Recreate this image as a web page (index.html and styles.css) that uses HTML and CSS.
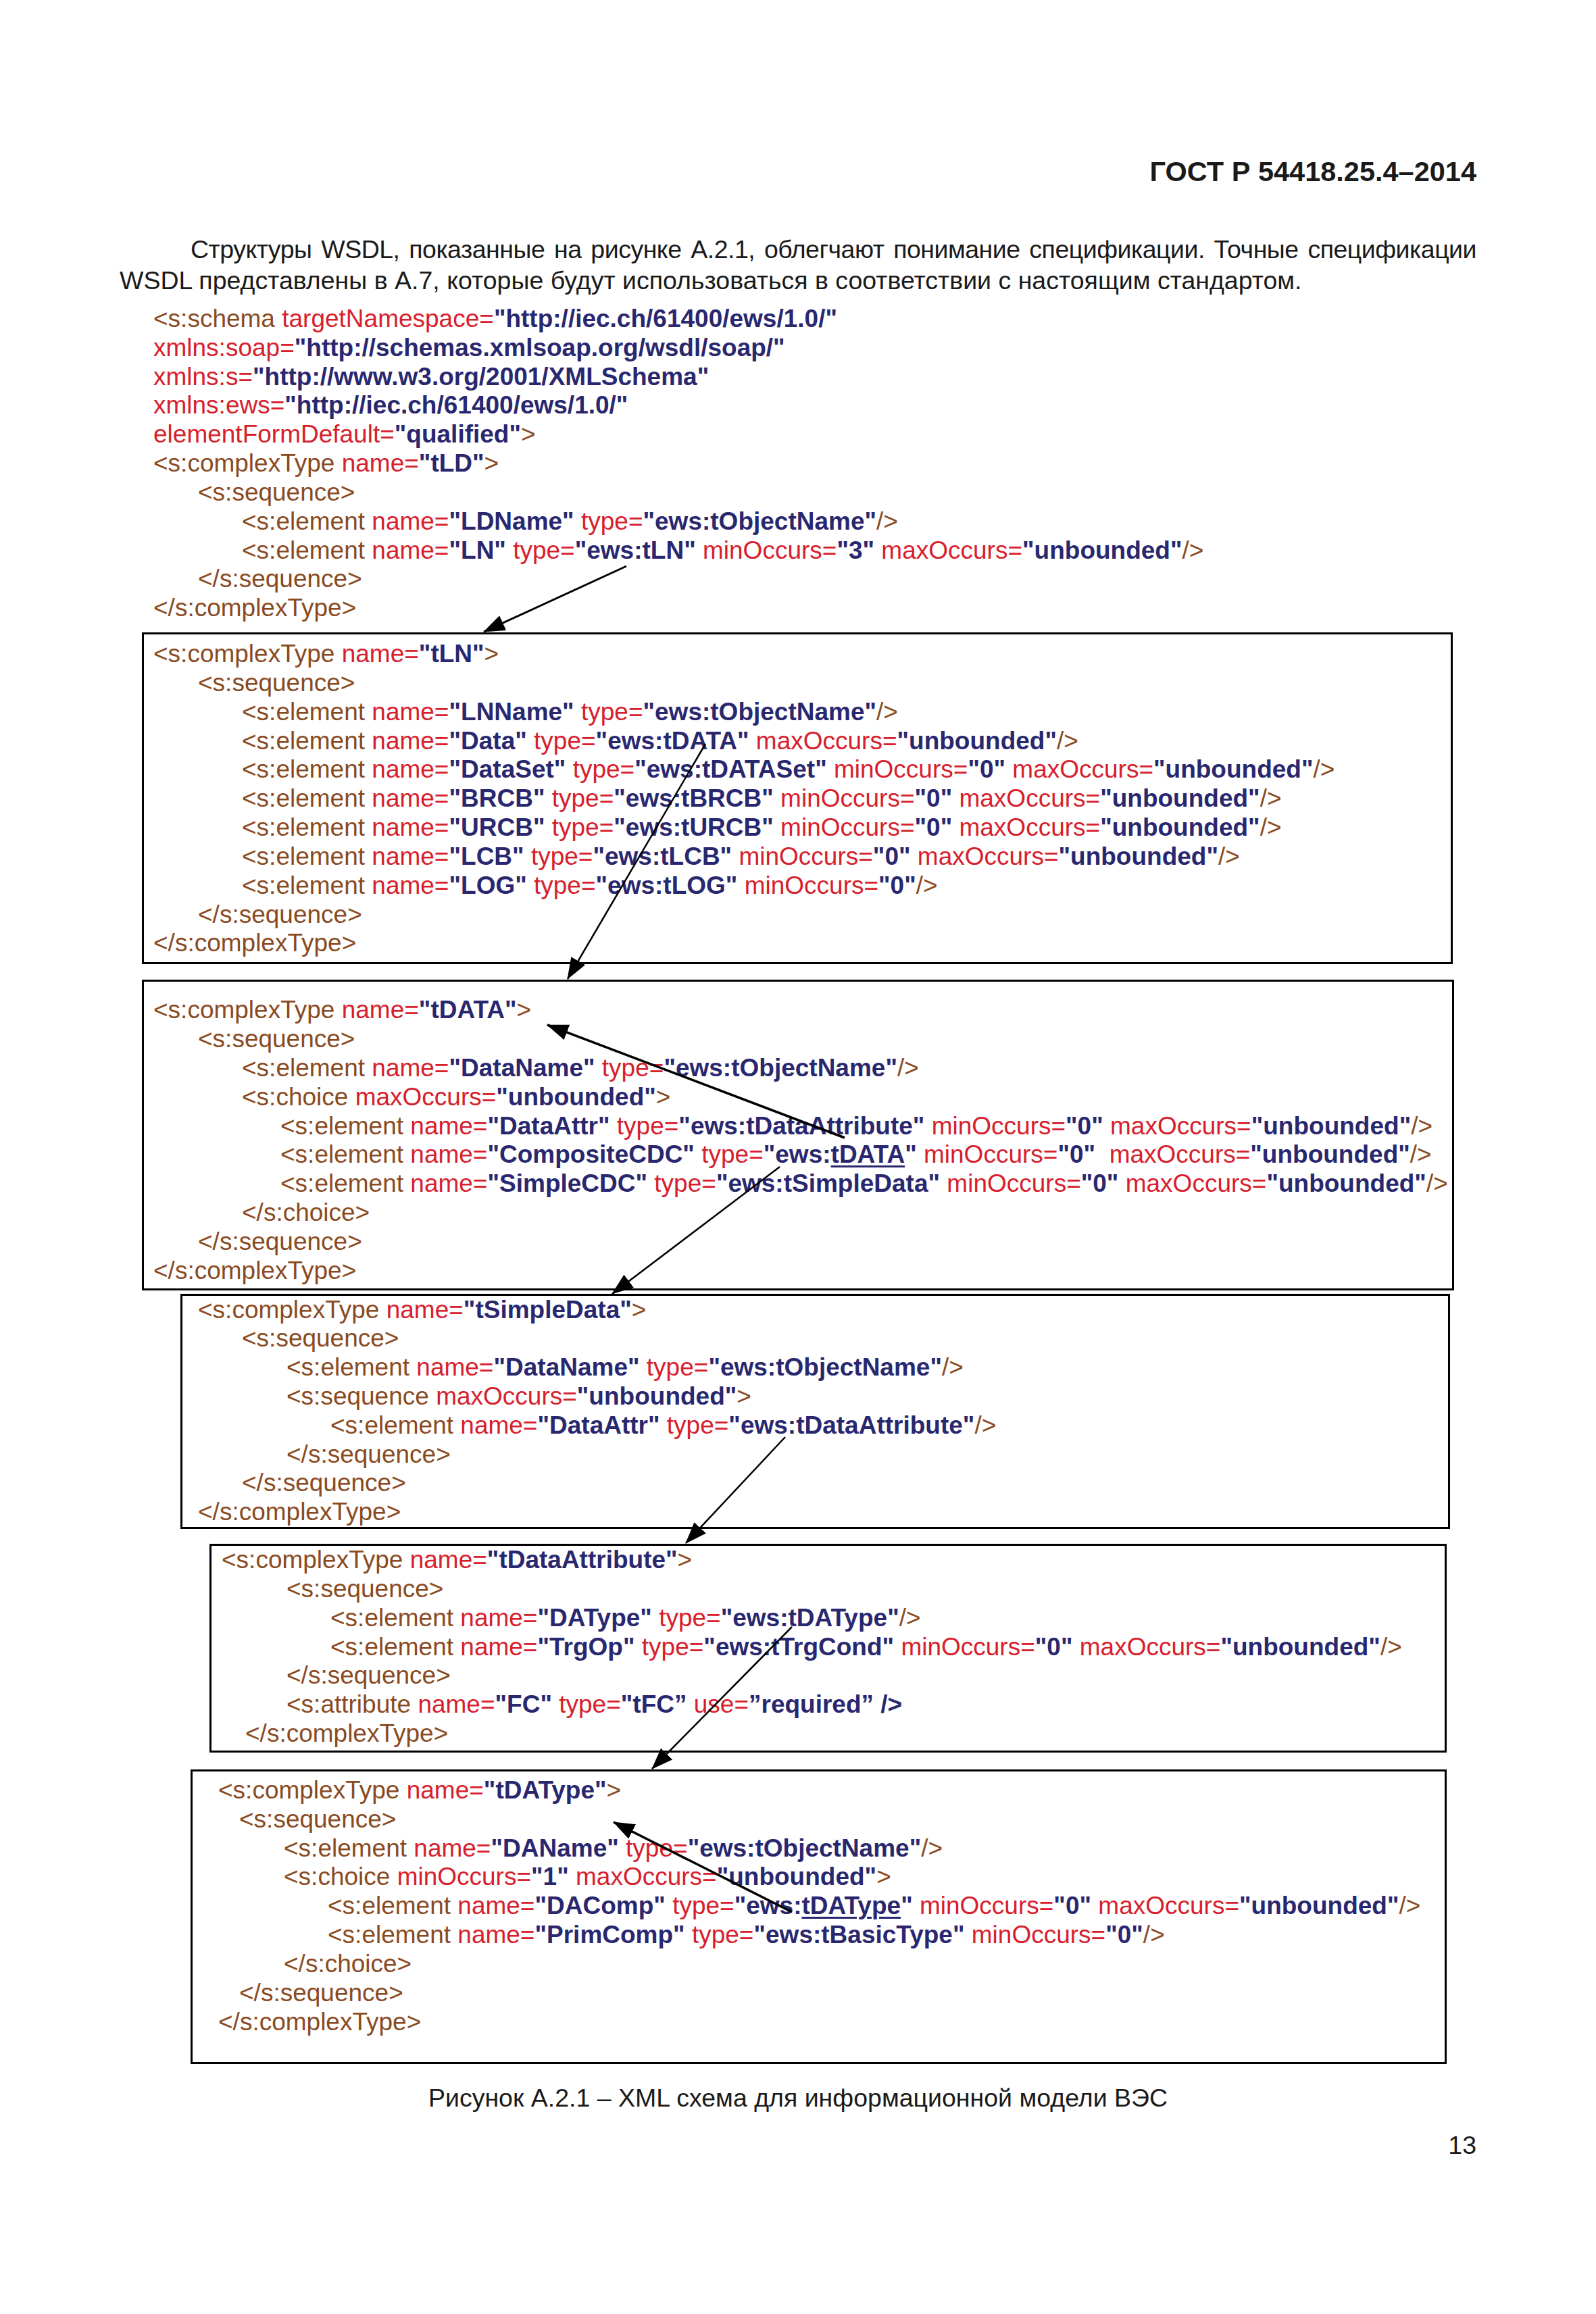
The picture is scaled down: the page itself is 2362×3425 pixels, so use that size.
FILE: index.html
```html
<!DOCTYPE html>
<html lang="ru">
<head>
    <meta charset="UTF-8">
    <title>ГОСТ Р 54418.25.4–2014 — стр. 13</title>
    <link rel="stylesheet" href="styles.css">
</head>
<body>
    <div class="page">
        <div class="doc-head">ГОСТ Р 54418.25.4–2014</div>

        <div class="intro">
            <div class="intro-first">Структуры WSDL, показанные на рисунке А.2.1, облегчают понимание спецификации. Точные спецификации</div>
            <div class="intro-rest">WSDL представлены в А.7, которые будут использоваться в соответствии с настоящим стандартом.</div>
        </div>

        <div class="figure">
            <!-- schema header, no frame -->
            <div class="code top-block">
                <div class="ln"><span class="tg">&lt;s:schema</span> <span class="at">targetNamespace=</span><span class="vl">"http://iec.ch/61400/ews/1.0/"</span></div>
                <div class="ln"><span class="at">xmlns:soap=</span><span class="vl">"http://schemas.xmlsoap.org/wsdl/soap/"</span></div>
                <div class="ln"><span class="at">xmlns:s=</span><span class="vl">"http://www.w3.org/2001/XMLSchema"</span></div>
                <div class="ln"><span class="at">xmlns:ews=</span><span class="vl">"http://iec.ch/61400/ews/1.0/"</span></div>
                <div class="ln"><span class="at">elementFormDefault=</span><span class="vl">"qualified"</span><span class="tg">&gt;</span></div>
                <div class="ln"><span class="tg">&lt;s:complexType</span> <span class="at">name=</span><span class="vl">"tLD"</span><span class="tg">&gt;</span></div>
                <div class="ln d1"><span class="tg">&lt;s:sequence&gt;</span></div>
                <div class="ln d2"><span class="tg">&lt;s:element</span> <span class="at">name=</span><span class="vl">"LDName"</span> <span class="at">type=</span><span class="vl">"ews:tObjectName"</span><span class="tg">/&gt;</span></div>
                <div class="ln d2"><span class="tg">&lt;s:element</span> <span class="at">name=</span><span class="vl">"LN"</span> <span class="at">type=</span><span class="vl">"ews:tLN"</span> <span class="at">minOccurs=</span><span class="vl">"3"</span> <span class="at">maxOccurs=</span><span class="vl">"unbounded"</span><span class="tg">/&gt;</span></div>
                <div class="ln d1"><span class="tg">&lt;/s:sequence&gt;</span></div>
                <div class="ln"><span class="tg">&lt;/s:complexType&gt;</span></div>
            </div>

            <div class="code box box-tln">
                <div class="ln"><span class="tg">&lt;s:complexType</span> <span class="at">name=</span><span class="vl">"tLN"</span><span class="tg">&gt;</span></div>
                <div class="ln d1"><span class="tg">&lt;s:sequence&gt;</span></div>
                <div class="ln d2"><span class="tg">&lt;s:element</span> <span class="at">name=</span><span class="vl">"LNName"</span> <span class="at">type=</span><span class="vl">"ews:tObjectName"</span><span class="tg">/&gt;</span></div>
                <div class="ln d2"><span class="tg">&lt;s:element</span> <span class="at">name=</span><span class="vl">"Data"</span> <span class="at">type=</span><span class="vl">"ews:tDATA"</span> <span class="at">maxOccurs=</span><span class="vl">"unbounded"</span><span class="tg">/&gt;</span></div>
                <div class="ln d2"><span class="tg">&lt;s:element</span> <span class="at">name=</span><span class="vl">"DataSet"</span> <span class="at">type=</span><span class="vl">"ews:tDATASet"</span> <span class="at">minOccurs=</span><span class="vl">"0"</span> <span class="at">maxOccurs=</span><span class="vl">"unbounded"</span><span class="tg">/&gt;</span></div>
                <div class="ln d2"><span class="tg">&lt;s:element</span> <span class="at">name=</span><span class="vl">"BRCB"</span> <span class="at">type=</span><span class="vl">"ews:tBRCB"</span> <span class="at">minOccurs=</span><span class="vl">"0"</span> <span class="at">maxOccurs=</span><span class="vl">"unbounded"</span><span class="tg">/&gt;</span></div>
                <div class="ln d2"><span class="tg">&lt;s:element</span> <span class="at">name=</span><span class="vl">"URCB"</span> <span class="at">type=</span><span class="vl">"ews:tURCB"</span> <span class="at">minOccurs=</span><span class="vl">"0"</span> <span class="at">maxOccurs=</span><span class="vl">"unbounded"</span><span class="tg">/&gt;</span></div>
                <div class="ln d2"><span class="tg">&lt;s:element</span> <span class="at">name=</span><span class="vl">"LCB"</span> <span class="at">type=</span><span class="vl">"ews:tLCB"</span> <span class="at">minOccurs=</span><span class="vl">"0"</span> <span class="at">maxOccurs=</span><span class="vl">"unbounded"</span><span class="tg">/&gt;</span></div>
                <div class="ln d2"><span class="tg">&lt;s:element</span> <span class="at">name=</span><span class="vl">"LOG"</span> <span class="at">type=</span><span class="vl">"ews:tLOG"</span> <span class="at">minOccurs=</span><span class="vl">"0"</span><span class="tg">/&gt;</span></div>
                <div class="ln d1"><span class="tg">&lt;/s:sequence&gt;</span></div>
                <div class="ln"><span class="tg">&lt;/s:complexType&gt;</span></div>
            </div>

            <div class="code box box-tdata">
                <div class="ln"><span class="tg">&lt;s:complexType</span> <span class="at">name=</span><span class="vl">"tDATA"</span><span class="tg">&gt;</span></div>
                <div class="ln d1"><span class="tg">&lt;s:sequence&gt;</span></div>
                <div class="ln d2"><span class="tg">&lt;s:element</span> <span class="at">name=</span><span class="vl">"DataName"</span> <span class="at">type=</span><span class="vl">"ews:tObjectName"</span><span class="tg">/&gt;</span></div>
                <div class="ln d2"><span class="tg">&lt;s:choice</span> <span class="at">maxOccurs=</span><span class="vl">"unbounded"</span><span class="tg">&gt;</span></div>
                <div class="ln d3"><span class="tg">&lt;s:element</span> <span class="at">name=</span><span class="vl">"DataAttr"</span> <span class="at">type=</span><span class="vl">"ews:tDataAttribute"</span> <span class="at">minOccurs=</span><span class="vl">"0"</span> <span class="at">maxOccurs=</span><span class="vl">"unbounded"</span><span class="tg">/&gt;</span></div>
                <div class="ln d3"><span class="tg">&lt;s:element</span> <span class="at">name=</span><span class="vl">"CompositeCDC"</span> <span class="at">type=</span><span class="vl">"ews:<u>tDATA</u>"</span> <span class="at">minOccurs=</span><span class="vl">"0"</span>  <span class="at">maxOccurs=</span><span class="vl">"unbounded"</span><span class="tg">/&gt;</span></div>
                <div class="ln d3"><span class="tg">&lt;s:element</span> <span class="at">name=</span><span class="vl">"SimpleCDC"</span> <span class="at">type=</span><span class="vl">"ews:tSimpleData"</span> <span class="at">minOccurs=</span><span class="vl">"0"</span> <span class="at">maxOccurs=</span><span class="vl">"unbounded"</span><span class="tg">/&gt;</span></div>
                <div class="ln d2"><span class="tg">&lt;/s:choice&gt;</span></div>
                <div class="ln d1"><span class="tg">&lt;/s:sequence&gt;</span></div>
                <div class="ln"><span class="tg">&lt;/s:complexType&gt;</span></div>
            </div>

            <div class="code box box-simple">
                <div class="ln"><span class="tg">&lt;s:complexType</span> <span class="at">name=</span><span class="vl">"tSimpleData"</span><span class="tg">&gt;</span></div>
                <div class="ln d1"><span class="tg">&lt;s:sequence&gt;</span></div>
                <div class="ln d2"><span class="tg">&lt;s:element</span> <span class="at">name=</span><span class="vl">"DataName"</span> <span class="at">type=</span><span class="vl">"ews:tObjectName"</span><span class="tg">/&gt;</span></div>
                <div class="ln d2"><span class="tg">&lt;s:sequence</span> <span class="at">maxOccurs=</span><span class="vl">"unbounded"</span><span class="tg">&gt;</span></div>
                <div class="ln d3"><span class="tg">&lt;s:element</span> <span class="at">name=</span><span class="vl">"DataAttr"</span> <span class="at">type=</span><span class="vl">"ews:tDataAttribute"</span><span class="tg">/&gt;</span></div>
                <div class="ln d2"><span class="tg">&lt;/s:sequence&gt;</span></div>
                <div class="ln d1"><span class="tg">&lt;/s:sequence&gt;</span></div>
                <div class="ln"><span class="tg">&lt;/s:complexType&gt;</span></div>
            </div>

            <div class="code box box-attr">
                <div class="ln"><span class="tg">&lt;s:complexType</span> <span class="at">name=</span><span class="vl">"tDataAttribute"</span><span class="tg">&gt;</span></div>
                <div class="ln d1"><span class="tg">&lt;s:sequence&gt;</span></div>
                <div class="ln d2"><span class="tg">&lt;s:element</span> <span class="at">name=</span><span class="vl">"DAType"</span> <span class="at">type=</span><span class="vl">"ews:tDAType"</span><span class="tg">/&gt;</span></div>
                <div class="ln d2"><span class="tg">&lt;s:element</span> <span class="at">name=</span><span class="vl">"TrgOp"</span> <span class="at">type=</span><span class="vl">"ews:tTrgCond"</span> <span class="at">minOccurs=</span><span class="vl">"0"</span> <span class="at">maxOccurs=</span><span class="vl">"unbounded"</span><span class="tg">/&gt;</span></div>
                <div class="ln d1"><span class="tg">&lt;/s:sequence&gt;</span></div>
                <div class="ln d1"><span class="tg">&lt;s:attribute</span> <span class="at">name=</span><span class="vl">"FC"</span> <span class="at">type=</span><span class="vl">"tFC”</span> <span class="at">use=</span><span class="vl">”required” /&gt;</span></div>
                <div class="ln dc"><span class="tg">&lt;/s:complexType&gt;</span></div>
            </div>

            <div class="code box box-datype">
                <div class="ln"><span class="tg">&lt;s:complexType</span> <span class="at">name=</span><span class="vl">"tDAType"</span><span class="tg">&gt;</span></div>
                <div class="ln d1"><span class="tg">&lt;s:sequence&gt;</span></div>
                <div class="ln d2"><span class="tg">&lt;s:element</span> <span class="at">name=</span><span class="vl">"DAName"</span> <span class="at">type=</span><span class="vl">"ews:tObjectName"</span><span class="tg">/&gt;</span></div>
                <div class="ln d2"><span class="tg">&lt;s:choice</span> <span class="at">minOccurs=</span><span class="vl">"1"</span> <span class="at">maxOccurs=</span><span class="vl">"unbounded"</span><span class="tg">&gt;</span></div>
                <div class="ln d3"><span class="tg">&lt;s:element</span> <span class="at">name=</span><span class="vl">"DAComp"</span> <span class="at">type=</span><span class="vl">"ews:<u>tDAType</u>"</span> <span class="at">minOccurs=</span><span class="vl">"0"</span> <span class="at">maxOccurs=</span><span class="vl">"unbounded"</span><span class="tg">/&gt;</span></div>
                <div class="ln d3"><span class="tg">&lt;s:element</span> <span class="at">name=</span><span class="vl">"PrimComp"</span> <span class="at">type=</span><span class="vl">"ews:tBasicType"</span> <span class="at">minOccurs=</span><span class="vl">"0"</span><span class="tg">/&gt;</span></div>
                <div class="ln d2"><span class="tg">&lt;/s:choice&gt;</span></div>
                <div class="ln d1"><span class="tg">&lt;/s:sequence&gt;</span></div>
                <div class="ln"><span class="tg">&lt;/s:complexType&gt;</span></div>
            </div>
        </div>

        <p class="caption">Рисунок А.2.1 – XML схема для информационной модели ВЭС</p>
        <div class="page-num">13</div>

        <!-- reference arrows drawn over the figure -->
        <svg class="arrows" width="2362" height="3425" viewBox="0 0 2362 3425">
            <defs>
                <marker id="head" viewBox="0 0 32 24" refX="31" refY="12" markerWidth="32" markerHeight="24" orient="auto" markerUnits="userSpaceOnUse">
                    <path d="M0 0 L32 12 L0 24 Z" fill="#000"/>
                </marker>
            </defs>
            <g stroke="#000" fill="none" marker-end="url(#head)">
                <line x1="927" y1="838" x2="716" y2="935" stroke-width="3"/>
                <line x1="1044" y1="1101" x2="840" y2="1449" stroke-width="2.5"/>
                <line x1="1250" y1="1684" x2="810" y2="1517" stroke-width="3.5"/>
                <line x1="1154" y1="1727" x2="906" y2="1915" stroke-width="2.5"/>
                <line x1="1162" y1="2127" x2="1015" y2="2284" stroke-width="2.5"/>
                <line x1="1172" y1="2408" x2="965" y2="2618" stroke-width="2.5"/>
                <line x1="1172" y1="2830" x2="908" y2="2697" stroke-width="3.5"/>
            </g>
        </svg>
    </div>
</body>
</html>
```

FILE: styles.css
```css
* {
    margin: 0;
    padding: 0;
    box-sizing: border-box;
}

body {
    background: #fff;
    color: #1a1a1a;
    font-family: 'Liberation Sans', Arial, sans-serif;
}

.page {
    position: relative;
    width: 2362px;
    height: 3425px;
    padding: 230px 177px 0;
}

.doc-head {
    text-align: right;
    font-size: 41.5px;
    font-weight: bold;
    line-height: 47px;
    color: #1a1a1a;
}

.intro {
    margin-top: 69px;
    font-size: 37.5px;
    line-height: 46px;
    color: #1a1a1a;
}

/* first line is set justified on its own, like the printed page */
.intro-first {
    text-indent: 105px;
    text-align: justify;
    text-align-last: justify;
    letter-spacing: -0.5px;
    word-spacing: -5px;
}

/* code listing */
.code {
    font-size: 37px;
    line-height: 42.83px;
    padding-left: 50px;
}

.ln {
    white-space: pre;
    height: 42.83px;
}

.tg {
    color: #8a4a1f;
}

.at {
    color: #d7202c;
}

.vl {
    color: #29286f;
    font-weight: bold;
}

.vl u {
    text-decoration-thickness: 3px;
    text-underline-offset: 4px;
}

.top-block {
    margin-top: 13px;
}

.top-block .d1 { padding-left: 66px; }
.top-block .d2 { padding-left: 131px; }

.box {
    border: 3px solid #000;
}

.box-tln {
    margin-top: 14px;
    margin-left: 33px;
    width: 1940px;
    padding: 8px 0 6px 14px;
}

.box-tln .d1 { padding-left: 66px; }
.box-tln .d2 { padding-left: 131px; }

.box-tdata {
    margin-top: 23px;
    margin-left: 33px;
    width: 1942px;
    padding: 21px 0 4px 14px;
}

.box-tdata .d1 { padding-left: 66px; }
.box-tdata .d2 { padding-left: 131px; }
.box-tdata .d3 { padding-left: 188px; }

.box-simple {
    margin-top: 5px;
    margin-left: 90px;
    width: 1879px;
    padding: 0 0 0 23px;
}

.box-simple .d1 { padding-left: 65px; }
.box-simple .d2 { padding-left: 131px; }
.box-simple .d3 { padding-left: 196px; }

.box-attr {
    margin-top: 22px;
    margin-left: 133px;
    width: 1831px;
    padding: 0 0 3px 15px;
}

.box-attr .d1 { padding-left: 96px; }
.box-attr .d2 { padding-left: 161px; }
.box-attr .dc { padding-left: 35px; }

.box-datype {
    margin-top: 25px;
    margin-left: 105px;
    width: 1859px;
    padding: 7px 0 38px 38px;
}

.box-datype .d1 { padding-left: 31px; }
.box-datype .d2 { padding-left: 97px; }
.box-datype .d3 { padding-left: 162px; }

.caption {
    margin-top: 27px;
    text-align: center;
    font-size: 37.5px;
    line-height: 46px;
    color: #1a1a1a;
}

.page-num {
    margin-top: 24px;
    text-align: right;
    font-size: 37.5px;
    line-height: 46px;
    color: #1a1a1a;
}

.arrows {
    position: absolute;
    top: 0;
    left: 0;
    pointer-events: none;
}
```
